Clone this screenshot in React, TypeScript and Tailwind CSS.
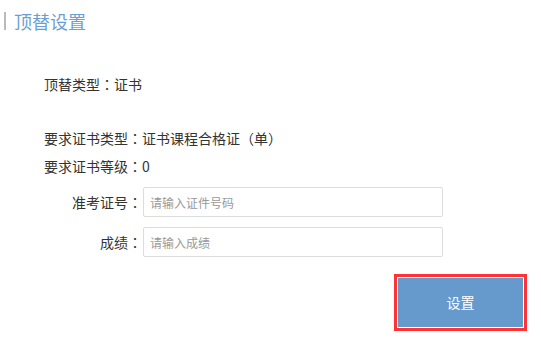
const Colon = () => (
  <span style={{ fontFamily: '"Noto Sans CJK TC", sans-serif' }}>：</span>
)

export default function App() {
  return (
    <div
      className="w-[541px] h-[346px] bg-white text-[#333] overflow-hidden"
      style={{ fontFamily: '"Noto Sans CJK SC", "Noto Sans", sans-serif' }}
    >
      {/* Title */}
      <div className="mt-[12px] ml-[4px] flex items-center h-[18px]">
        <div className="w-[2px] h-[18px] bg-[#bbbbbb]" />
        <h1 className="ml-[8px] text-[18px] leading-[18px] text-[#6a9fd4] font-normal">顶替设置</h1>
      </div>

      <div className="pl-[44px]">
        <p className="mt-[44px] text-[14px] leading-[20px]">顶替类型<Colon />证书</p>
        <p className="mt-[34px] text-[14px] leading-[20px]">要求证书类型<Colon />证书课程合格证（单）</p>
        <p className="mt-[8px] text-[14px] leading-[20px]">要求证书等级<Colon />0</p>

        <div className="mt-[11px] flex items-center">
          <label className="w-[98px] text-right text-[14px]">准考证号<Colon /></label>
          <input
            className="ml-px w-[300px] h-[30px] border border-[#dddddd] rounded-[2px] px-[6px] text-[12px] outline-none placeholder:text-[#999]"
            placeholder="请输入证件号码"
          />
        </div>
        <div className="mt-[10px] flex items-center">
          <label className="w-[98px] text-right text-[14px]">成绩<Colon /></label>
          <input
            className="ml-px w-[300px] h-[30px] border border-[#dddddd] rounded-[2px] px-[6px] text-[12px] outline-none placeholder:text-[#999]"
            placeholder="请输入成绩"
          />
        </div>
      </div>

      <div className="mt-[17px] ml-[394px] w-[133px] border-[3px] border-[#ff3333] p-px">
        <button className="w-[125px] h-[49px] bg-[#6699cc] text-white text-[14px] flex items-center justify-center">
          设置
        </button>
      </div>
    </div>
  )
}
